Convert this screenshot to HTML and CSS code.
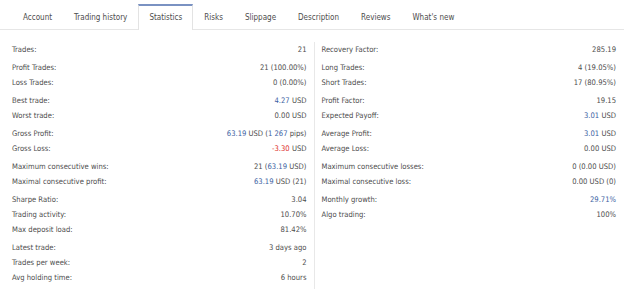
FILE: index.html
```html
<!DOCTYPE html>
<html>
<head>
<meta charset="utf-8">
<link rel="stylesheet" href="styles.css">
</head>
<body>
<div class="tabs">
  <div class="tab">Account</div>
  <div class="tab">Trading history</div>
  <div class="tab active">Statistics</div>
  <div class="tab">Risks</div>
  <div class="tab">Slippage</div>
  <div class="tab">Description</div>
  <div class="tab">Reviews</div>
  <div class="tab">What's new</div>
</div>
<div class="stats">
  <div class="col left">
    <div class="group">
      <div class="row"><span>Trades:</span><span>21</span></div>
    </div>
    <div class="group">
      <div class="row"><span>Profit Trades:</span><span>21 (100.00%)</span></div>
      <div class="row"><span>Loss Trades:</span><span>0 (0.00%)</span></div>
    </div>
    <div class="group">
      <div class="row"><span>Best trade:</span><span><b class="pos">4.27</b> USD</span></div>
      <div class="row"><span>Worst trade:</span><span>0.00 USD</span></div>
    </div>
    <div class="group">
      <div class="row"><span>Gross Profit:</span><span><b class="pos">63.19</b> USD (<b class="pos">1 267</b> pips)</span></div>
      <div class="row"><span>Gross Loss:</span><span><b class="neg">-3.30</b> USD</span></div>
    </div>
    <div class="group">
      <div class="row"><span>Maximum consecutive wins:</span><span>21 (<b class="pos">63.19</b> USD)</span></div>
      <div class="row"><span>Maximal consecutive profit:</span><span><b class="pos">63.19</b> USD (21)</span></div>
    </div>
    <div class="group">
      <div class="row"><span>Sharpe Ratio:</span><span>3.04</span></div>
      <div class="row"><span>Trading activity:</span><span>10.70%</span></div>
      <div class="row"><span>Max deposit load:</span><span>81.42%</span></div>
    </div>
    <div class="group">
      <div class="row"><span>Latest trade:</span><span>3 days ago</span></div>
      <div class="row"><span>Trades per week:</span><span>2</span></div>
      <div class="row"><span>Avg holding time:</span><span>6 hours</span></div>
    </div>
  </div>
  <div class="col right">
    <div class="group">
      <div class="row"><span>Recovery Factor:</span><span>285.19</span></div>
    </div>
    <div class="group">
      <div class="row"><span>Long Trades:</span><span>4 (19.05%)</span></div>
      <div class="row"><span>Short Trades:</span><span>17 (80.95%)</span></div>
    </div>
    <div class="group">
      <div class="row"><span>Profit Factor:</span><span>19.15</span></div>
      <div class="row"><span>Expected Payoff:</span><span><b class="pos">3.01</b> USD</span></div>
    </div>
    <div class="group">
      <div class="row"><span>Average Profit:</span><span><b class="pos">3.01</b> USD</span></div>
      <div class="row"><span>Average Loss:</span><span>0.00 USD</span></div>
    </div>
    <div class="group">
      <div class="row"><span>Maximum consecutive losses:</span><span>0 (0.00 USD)</span></div>
      <div class="row"><span>Maximal consecutive loss:</span><span>0.00 USD (0)</span></div>
    </div>
    <div class="group">
      <div class="row"><span>Monthly growth:</span><span><b class="pos">29.71%</b></span></div>
      <div class="row"><span>Algo trading:</span><span>100%</span></div>
    </div>
  </div>
</div>
</body>
</html>
```

FILE: styles.css
```css
html, body {
  margin: 0;
  padding: 0;
  background: #ffffff;
}
body {
  font-family: "DejaVu Sans Condensed", "DejaVu Sans", sans-serif;
  color: #4d4d4d;
  width: 624px;
  height: 295px;
  overflow: hidden;
}
.tabs {
  display: flex;
  padding: 4px 0 0 12px;
  height: 25px;
  border-bottom: 1px solid #e6e6e6;
}
.tab {
  display: flex;
  align-items: center;
  padding: 0 10px;
  height: 25px;
  border: 1px solid transparent;
  border-bottom: none;
  font-size: 8px;
  color: #4d4d4d;
  white-space: nowrap;
}
.tab.active {
  background: #ffffff;
  border-color: #e3e3e3;
  border-top: 2px solid #7a92c2;
  margin-bottom: -1px;
  padding-bottom: 1px;
  box-sizing: border-box;
  height: 26px;
}
.stats {
  display: flex;
  padding: 12px 8px 0 12px;
}
.col {
  flex: 1;
  font-size: 7.6px;
}
.col.left {
  border-right: 1px solid #e8e8e8;
  padding-right: 7px;
  padding-bottom: 4px;
}
.col.right {
  padding-left: 7px;
}
.group + .group {
  margin-top: 3px;
}
.row {
  display: flex;
  justify-content: space-between;
  align-items: center;
  height: 15px;
  white-space: nowrap;
}
b {
  font-weight: normal;
}
.pos {
  color: #3c5fa3;
}
.neg {
  color: #dd2f2a;
}
```
